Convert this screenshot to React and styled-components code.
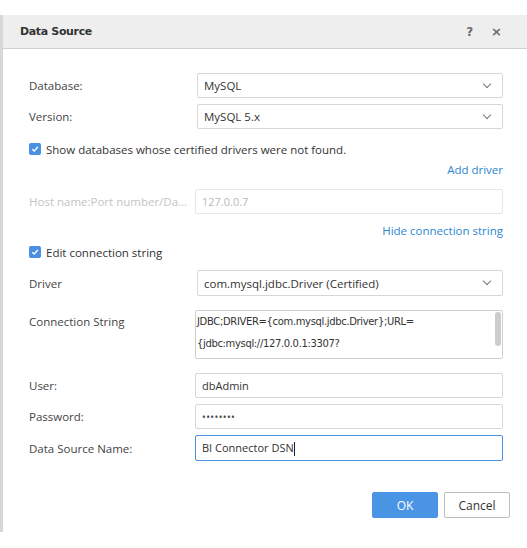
import React from "react";
import styled, { createGlobalStyle } from "styled-components";

const GlobalStyle = createGlobalStyle`
  body {
    margin: 0;
    background: #ffffff;
    font-family: "Open Sans", "Noto Sans", sans-serif;
    font-size: 11.5px;
    color: #333333;
  }
`;

const Dialog = styled.div`
  margin-top: 15px;
  height: 517px;
  border-left: 3px solid #d7d7d7;
  background: #ffffff;
  display: flex;
  flex-direction: column;
`;

const Header = styled.header`
  height: 33px;
  background: #eeeeee;
  border-bottom: 1px solid #cfcfcf;
  display: flex;
  align-items: center;
  padding: 0 25px 0 17px;
  h3 {
    flex: 1;
    margin: 0;
    font-family: "DejaVu Sans", Verdana, sans-serif;
    font-size: 11px;
    letter-spacing: -0.35px;
    font-weight: 700;
    color: #333333;
  }
`;

const HeaderIcon = styled.span`
  font-family: "DejaVu Sans", sans-serif;
  font-weight: 700;
  font-size: ${(p) => p.size || 12}px;
  color: #6b6b6b;
  margin-left: ${(p) => p.gap || 0}px;
  cursor: pointer;
`;

const Body = styled.div`
  padding: 0 24px 0 26px;
  display: flex;
  flex-direction: column;
`;

const Row = styled.div`
  display: grid;
  grid-template-columns: 168px 1fr;
  align-items: ${(p) => (p.top ? "start" : "center")};
  margin-top: ${(p) => p.mt}px;
`;

const Label = styled.label`
  color: ${(p) => (p.disabled ? "#c4c4c4" : "#444444")};
  padding-top: ${(p) => (p.top ? "4px" : "0")};
  white-space: nowrap;
`;

const Box = styled.div`
  height: ${(p) => p.h || 25}px;
  box-sizing: border-box;
  margin-left: ${(p) => (p.shift ? -2 : 0)}px;
  border: 1px solid ${(p) => (p.focus ? "#4a90e2" : p.disabled ? "#e6e6e6" : "#d6d6d6")};
  border-radius: 2px;
  display: flex;
  align-items: center;
  padding: 0 10px 0 6px;
  color: ${(p) => (p.disabled ? "#b8b8b8" : "#333333")};
  font-size: ${(p) => (p.small ? 11 : 11.5)}px;
  background: #ffffff;
`;

const Value = styled.span`
  flex: 1;
  white-space: nowrap;
`;

const Caret = styled.span`
  width: 5px;
  height: 5px;
  border-right: 1px solid #777777;
  border-bottom: 1px solid #777777;
  transform: rotate(45deg);
  margin-top: -4px;
  margin-right: 2px;
`;

const CheckRow = styled.div`
  display: flex;
  align-items: center;
  height: 20px;
  margin-top: ${(p) => p.mt}px;
  gap: 5px;
  color: #333333;
`;

const Check = styled.span`
  width: 12px;
  height: 12px;
  border-radius: 2px;
  background: #4a90e2;
  display: flex;
  align-items: center;
  justify-content: center;
`;

const LinkRow = styled.div`
  display: flex;
  justify-content: flex-end;
  align-items: center;
  height: 20px;
  margin-top: ${(p) => p.mt}px;
  a {
    color: #2c86d0;
    text-decoration: none;
  }
`;

const TextArea = styled.div`
  position: relative;
  height: 49px;
  box-sizing: border-box;
  margin-left: -2px;
  border: 1px solid #d0d0d0;
  border-radius: 2px;
  padding: 0 14px 0 1px;
  font-family: "DejaVu Sans", Tahoma, sans-serif;
  font-size: 10px;
  letter-spacing: -0.35px;
  line-height: 22px;
  color: #333333;
  overflow: hidden;
`;

const Thumb = styled.span`
  position: absolute;
  right: 1px;
  top: 1px;
  width: 6px;
  height: 34px;
  border-radius: 3px;
  background: #cccccc;
`;

const Cursor = styled.span`
  display: inline-block;
  width: 1px;
  height: 14px;
  background: #222222;
  vertical-align: middle;
`;

const Dots = styled.span`
  flex: 1;
  font-size: 10px;
  letter-spacing: 0.4px;
  color: #444444;
`;

const Footer = styled.div`
  display: flex;
  justify-content: flex-end;
  gap: 6px;
  margin-top: 31px;
  padding-right: 17px;
`;

const Button = styled.button`
  width: 66px;
  height: 26px;
  box-sizing: border-box;
  border-radius: 2px;
  font-family: "Open Sans", "Noto Sans", sans-serif;
  font-size: 12px;
  cursor: pointer;
  border: 1px solid ${(p) => (p.primary ? "#4a94e6" : "#bdbdbd")};
  background: ${(p) => (p.primary ? "#4a94e6" : "#ffffff")};
  color: ${(p) => (p.primary ? "#ffffff" : "#333333")};
`;

const Tick = () => (
  <svg width="8" height="8" viewBox="0 0 8 8">
    <path d="M1.3 4.2 L3.2 6 L6.8 2" fill="none" stroke="#ffffff" strokeWidth="1.4" />
  </svg>
);

const Select = ({ value, h }) => (
  <Box h={h}>
    <Value>{value}</Value>
    <Caret />
  </Box>
);

const App = () => {
  return (
    <>
      <GlobalStyle />
      <Dialog>
        <Header>
          <h3>Data Source</h3>
          <HeaderIcon size={12}>?</HeaderIcon>
          <HeaderIcon size={13} gap={18}>×</HeaderIcon>
        </Header>
        <Body>
          <Row mt={24}>
            <Label>Database:</Label>
            <Select value="MySQL" />
          </Row>
          <Row mt={6}>
            <Label>Version:</Label>
            <Select value="MySQL 5.x" />
          </Row>
          <CheckRow mt={10}>
            <Check>
              <Tick />
            </Check>
            Show databases whose certified drivers were not found.
          </CheckRow>
          <LinkRow mt={0}>
            <a href="#">Add driver</a>
          </LinkRow>
          <Row mt={10}>
            <Label disabled>Host name:Port number/Da...</Label>
            <Box disabled small shift>
              <Value>127.0.0.7</Value>
            </Box>
          </Row>
          <LinkRow mt={6}>
            <a href="#">Hide connection string</a>
          </LinkRow>
          <CheckRow mt={2}>
            <Check>
              <Tick />
            </Check>
            Edit connection string
          </CheckRow>
          <Row mt={8}>
            <Label>Driver</Label>
            <Select h={26} value="com.mysql.jdbc.Driver (Certified)" />
          </Row>
          <Row mt={14} top>
            <Label top>Connection String</Label>
            <TextArea>
              JDBC;DRIVER={"{"}com.mysql.jdbc.Driver{"}"};URL=
              <br />
              {"{"}jdbc:mysql://127.0.0.1:3307?
              <Thumb />
            </TextArea>
          </Row>
          <Row mt={14}>
            <Label>User:</Label>
            <Box small shift>
              <Value>dbAdmin</Value>
            </Box>
          </Row>
          <Row mt={6}>
            <Label>Password:</Label>
            <Box small shift>
              <Dots>••••••••</Dots>
            </Box>
          </Row>
          <Row mt={6}>
            <Label>Data Source Name:</Label>
            <Box focus h={26} small shift>
              <Value>
                BI Connector DSN
                <Cursor />
              </Value>
            </Box>
          </Row>
        </Body>
        <Footer>
          <Button primary>OK</Button>
          <Button>Cancel</Button>
        </Footer>
      </Dialog>
    </>
  );
};

export default App;
